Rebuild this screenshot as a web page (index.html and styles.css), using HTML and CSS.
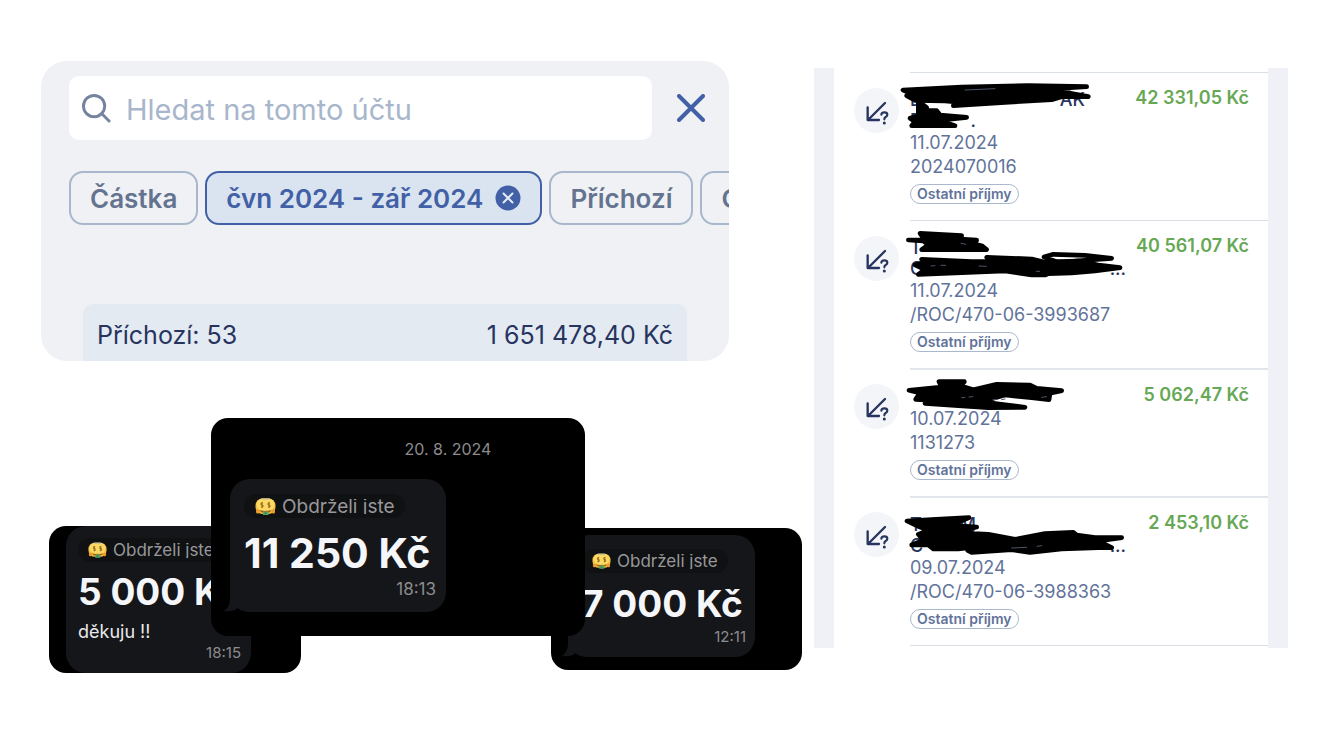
FILE: index.html
```html
<!DOCTYPE html>
<html lang="cs">
<head>
<meta charset="utf-8">
<meta name="viewport" content="width=device-width, initial-scale=1">
<title>Přehled příchozích plateb</title>
<link rel="stylesheet" href="styles.css">
</head>
<body>
<svg class="sprite" aria-hidden="true">
  <symbol id="money-face" viewBox="0 0 42 34">
    <rect x="1" y="1" width="40" height="31" rx="14" fill="#f3bd3c"/>
    <rect x="3" y="1" width="36" height="24" rx="12" fill="#fad863"/>
    <path d="M11 1h20l-3 2H14z" fill="#b9bdae"/>
    <path d="M16 10h-4v4h4v4h-4M14 8v12M30 10h-4v4h4v4h-4M28 8v12" fill="none" stroke="#8f661c" stroke-width="1.8"/>
    <path d="M9 24q12 4 24 0-2 6-12 6T9 24z" fill="#a45d1d"/>
    <path d="M16 27h11v7H16z" fill="#55a866"/>
    <path d="M19 29h4v3h-4z" fill="#2f7d47"/>
    <rect x="2" y="23" width="7" height="8" rx="3" fill="#e79b2d"/>
    <rect x="33" y="23" width="7" height="8" rx="3" fill="#e79b2d"/>
  </symbol>
  <symbol id="tail" viewBox="0 0 24 20">
    <path d="M6 0v8Q5 16 0 19q9 1 14-3 4 4 10 3V0z" fill="#151619"/>
  </symbol>
  <symbol id="incoming" viewBox="0 0 72 72">
    <path d="M57 6L6 57M5 19v38h34" fill="none" stroke="#26345f" stroke-width="7" stroke-linecap="round" stroke-linejoin="round"/>
    <path d="M46 41q1-7 9-7 9 0 9 7 0 4-5 7-4 2-4 7" fill="none" stroke="#26345f" stroke-width="6.500" stroke-linecap="round"/>
    <circle cx="55" cy="66" r="4.500" fill="#26345f"/>
  </symbol>
</svg>
<main class="page">
  <div class="left">
    <section class="account">
      <div class="search-row">
        <label class="search">
          <svg class="search-icon" viewBox="0 0 30 30" aria-hidden="true"><circle cx="12.5" cy="12.5" r="11"/><path d="M20.500 20.500l7.500 7.500"/></svg>
          <input type="text" placeholder="Hledat na tomto účtu" aria-label="Hledat na tomto účtu">
        </label>
        <button class="close" type="button" aria-label="Zavřít"><svg viewBox="0 0 28 28" aria-hidden="true"><path d="M2 2l24 24M26 2L2 26"/></svg></button>
      </div>
      <div class="chips">
        <button class="chip" type="button">Částka</button>
        <button class="chip chip-active" type="button">čvn 2024 - zář 2024
          <svg viewBox="0 0 26 26" aria-hidden="true"><circle cx="13" cy="13" r="12.5" fill="#4260a5"/><path d="M8.500 8.500l9 9M17.500 8.500l-9 9" stroke="#e4ebf5" stroke-width="2" stroke-linecap="round"/></svg>
        </button>
        <button class="chip" type="button">Příchozí</button>
        <button class="chip" type="button">Odchozí</button>
      </div>
      <div class="summary"><span>Příchozí: 53</span><span>1 651 478,40 Kč</span></div>
    </section>

    <section class="chats">
      <article class="chat chat-left">
        <div class="bubble">
          <div class="pill"><svg aria-hidden="true"><use href="#money-face"/></svg><span>Obdrželi jste</span></div>
          <div class="sum">5 000 Kč</div>
          <div class="note">děkuju !!</div>
          <time>18:15</time>
        </div>
      </article>
      <article class="chat chat-main">
        <div class="day">20. 8. 2024</div>
        <div class="bubble">
          <div class="pill"><svg aria-hidden="true"><use href="#money-face"/></svg><span>Obdrželi jste</span></div>
          <div class="sum">11 250 Kč</div>
          <time>18:13</time>
          <svg class="tail" aria-hidden="true"><use href="#tail"/></svg>
        </div>
      </article>
      <article class="chat chat-right">
        <div class="bubble">
          <div class="pill"><svg aria-hidden="true"><use href="#money-face"/></svg><span>Obdrželi jste</span></div>
          <div class="sum">7 000 Kč</div>
          <time>12:11</time>
          <svg class="tail" aria-hidden="true"><use href="#tail"/></svg>
        </div>
      </article>
    </section>
  </div>

  <section class="payments">
    <article class="payment">
      <div class="badge"><svg aria-hidden="true"><use href="#incoming"/></svg></div>
      <div class="body">
        <div class="info">
          <div class="name">
            <div class="line line-short"><span>D</span><span>AK</span></div>
            <div class="line line-tiny"><span>D</span><span>.</span></div>
            <svg class="scribble" viewBox="30 6 660 171" aria-hidden="true">
              <path d="M24 45L200 36L400 32L575 35L490 40L530 56L580 65L500 65L470 74L330 82L175 92L200 82L150 78L60 76L35 62L60 60Z"/>
              <path d="M70 78L95 98L70 105L125 107L135 120L215 127L130 136L180 152L50 152L60 140L45 130L70 122Z"/>
              <path class="slit" d="M210 45L300 41"/>
            </svg>
          </div>
          <div>11.07.2024</div><div>2024070016</div>
          <span class="tag">Ostatní příjmy</span>
        </div>
        <div class="amount">42 331,05 Kč</div>
      </div>
    </article>
    <article class="payment">
      <div class="badge"><svg aria-hidden="true"><use href="#incoming"/></svg></div>
      <div class="body">
        <div class="info">
          <div class="name">
            <div class="line"><span>T</span></div>
            <div class="line"><span>C</span><span>...</span></div>
            <svg class="scribble" viewBox="180 30 660 171" aria-hidden="true">
              <path d="M190 75L240 75L225 55L350 62L345 72L395 75L390 88L410 92L425 104L230 104L250 90L235 78Z"/>
              <path d="M210 150L240 142L230 133L380 140L470 138L425 127L560 132L600 142L640 140L700 138L760 150L825 158L750 168L680 174L610 176L600 180L560 180L480 168L350 173L220 178L240 164Z"/>
              <path class="stroke" d="M640 142L597 126L625 118L720 121L800 130L690 138"/>
              <path class="slit" d="M258 153L270 152M288 151L302 151M402 153L424 154M348 85L362 88M574 169L584 169"/>
            </svg>
          </div>
          <div>11.07.2024</div><div>/ROC/470-06-3993687</div>
          <span class="tag">Ostatní příjmy</span>
        </div>
        <div class="amount">40 561,07 Kč</div>
      </div>
    </article>
    <article class="payment">
      <div class="badge"><svg aria-hidden="true"><use href="#incoming"/></svg></div>
      <div class="body">
        <div class="info">
          <div class="name">
            <div class="line"></div>
            <svg class="scribble" viewBox="180 27 660 171" aria-hidden="true">
              <path d="M192 76L290 66L282 50L358 50L345 62L385 74L455 58L555 60L575 70L650 77L615 85L612 104L560 98L480 90L430 104L420 112L540 127L430 128L240 115L270 106L212 103L225 84Z"/>
              <path class="slit" d="M350 98L360 97M372 96L384 95M444 104L456 103M470 104L480 102M590 97L605 95"/>
            </svg>
          </div>
          <div>10.07.2024</div><div>1131273</div>
          <span class="tag">Ostatní příjmy</span>
        </div>
        <div class="amount">5 062,47 Kč</div>
      </div>
    </article>
    <article class="payment">
      <div class="badge"><svg aria-hidden="true"><use href="#incoming"/></svg></div>
      <div class="body">
        <div class="info">
          <div class="name">
            <div class="line line-tiny"><span>T</span><span>M</span></div>
            <div class="line"><span>C</span><span>...</span></div>
            <svg class="scribble" viewBox="180 33 660 171" aria-hidden="true">
              <path d="M186 90L260 86L372 80L340 94L330 104L395 108L360 116L385 128L430 130L510 145L600 128L685 124L695 132L750 140L830 140L760 150L800 170L760 170L650 174L555 184L500 176L380 184L368 178L390 168L340 174L265 174L250 162L200 162L235 148L220 130L250 118L220 106Z"/>
              <path class="slit" d="M500 171L545 169M576 166L590 164"/>
            </svg>
          </div>
          <div>09.07.2024</div><div>/ROC/470-06-3988363</div>
          <span class="tag">Ostatní příjmy</span>
        </div>
        <div class="amount">2 453,10 Kč</div>
      </div>
    </article>
    <div class="end"></div>
  </section>
</main>
</body>
</html>
```
FILE: styles.css
```css
* { box-sizing: border-box; }
body {
  margin: 0;
  background: #fff;
  color: #26345f;
  font-family: Inter, "Noto Sans", "Liberation Sans", sans-serif;
}
button, input { font: inherit; margin: 0; }
.sprite { display: none; }

.page {
  display: grid;
  grid-template-columns: minmax(0, 761fr) minmax(0, 474fr);
  gap: 12px;
  align-items: start;
  padding: 61px 48px 24px 41px;
}

/* Account panel */
.account {
  margin-right: 73px;
  padding: 15px 0 0 28px;
  border-radius: 26px;
  background: #eff1f5;
  overflow: hidden;
}
.search-row { display: flex; align-items: center; }
.search {
  display: flex;
  flex: 1;
  align-items: center;
  gap: 15px;
  height: 64px;
  padding: 0 13px;
  border-radius: 10px;
  background: #fff;
}
.search-icon {
  flex: none;
  width: 29px;
  height: 29px;
  fill: none;
  stroke: #74849f;
  stroke-width: 3;
  stroke-linecap: round;
}
.search input {
  flex: 1;
  min-width: 0;
  padding: 2px 0 0;
  border: 0;
  outline: 0;
  background: none;
  font-size: 29px;
}
.search input::placeholder { color: #a8b6cb; opacity: 1; }
.close {
  display: grid;
  place-items: center;
  width: 77px;
  height: 64px;
  padding: 0;
  border: 0;
  background: none;
}
.close svg {
  width: 28px;
  height: 28px;
  fill: none;
  stroke: #4260a5;
  stroke-width: 4;
  stroke-linecap: round;
}
.chips { display: flex; gap: 7px; margin-top: 31px; }
.chip {
  display: flex;
  flex: none;
  align-items: center;
  gap: 12px;
  height: 54px;
  padding: 0 19px;
  border: 2px solid #a8b7cc;
  border-radius: 14px;
  background: none;
  color: #64738f;
  font-size: 26px;
  font-weight: 600;
}
.chip-active { border-color: #4260a5; background: #dae4f0; color: #4260a5; }
.chip svg { width: 26px; height: 26px; }
.summary {
  display: flex;
  justify-content: space-between;
  margin: 79px 42px 0 14px;
  padding: 5px 14px 0;
  border-radius: 10px 10px 0 0;
  background: #e4eaf1;
  font-size: 25px;
  line-height: 52px;
}

/* Chat bubbles: the middle card overlaps both neighbours */
.chats {
  display: grid;
  grid-template-columns: 162fr 90fr 250fr 34fr 217fr;
  align-items: start;
  margin: 57px 0 0 8px;
}
.chat {
  grid-row: 1;
  border-radius: 17px;
  background: #000;
  overflow: hidden;
  white-space: nowrap;
}
.chat-left { grid-column: 1 / 3; margin-top: 108px; padding-left: 17px; }
.chat-main { grid-column: 2 / 5; z-index: 1; padding: 18px 0 24px 19px; }
.chat-right { grid-column: 4 / 6; margin-top: 110px; padding: 7px 0 13px 17px; }
.day {
  padding-left: 81px;
  color: #8c8c8e;
  font-size: 16px;
  line-height: 27px;
  text-align: center;
}
.bubble {
  position: relative;
  display: flex;
  flex-direction: column;
  align-items: flex-start;
  border-radius: 20px;
  background: #151619;
}
.chat-main .bubble { width: 216px; margin-top: 16px; padding: 15px 10px 17px 14px; }
.chat-left .bubble { width: 185px; padding: 12px 10px 13px 12px; }
.chat-right .bubble { width: 187px; padding: 14px 9px 14px 14px; }
.pill {
  display: flex;
  align-items: center;
  gap: 6px;
  height: 24px;
  padding: 0 10px 0 11px;
  border-radius: 12px;
  background: #101113;
  color: #98989b;
  font-size: 19px;
}
.pill svg { width: 21px; height: 17px; }
.pill span { overflow: hidden; line-height: 15px; }
.chat-left .pill, .chat-right .pill { padding-left: 10px; font-size: 17px; }
.chat-left .pill svg, .chat-right .pill svg { width: 19px; height: 16px; }
.sum {
  margin-top: 5px;
  color: #f5f6f9;
  font-size: 41px;
  font-weight: 700;
  line-height: 60px;
}
.chat-left .sum { margin-top: 0; font-size: 37px; line-height: 60px; }
.chat-right .sum { margin-top: 4px; font-size: 37px; line-height: 54px; }
.note { padding-top: 1px; color: #e9e9ec; font-size: 18px; line-height: 18px; }
.bubble time {
  align-self: flex-end;
  color: #8c8c8e;
  font-size: 17px;
  line-height: 12px;
}
.chat-left time { padding-top: 5px; line-height: 14px; }
.chat-left time, .chat-right time { font-size: 15px; }
.tail { position: absolute; left: -6px; bottom: 0; width: 24px; height: 20px; }

/* Payment list */
.payments {
  margin-top: 7px;
  padding-top: 4px;
  border: solid #eff1f6;
  border-width: 0 20px;
}
.payment { display: flex; padding-left: 20px; }
.badge {
  display: grid;
  flex: none;
  place-items: center;
  width: 45px;
  height: 45px;
  margin: 16px 11px 0 0;
  border-radius: 50%;
  background: #f4f5f8;
}
.badge svg { width: 24px; height: 24px; margin: 4px 0 0 3px; }
.body {
  display: flex;
  flex: 1;
  justify-content: space-between;
  min-width: 0;
  padding-bottom: 16px;
  border-top: 1px solid #dadfe6;
}
.payment:nth-child(n+3) .body { border-top: 2px solid #e2e6eb; }
.info {
  padding-top: 16px;
  color: #62739a;
  font-size: 18px;
  line-height: 24px;
}
.name {
  position: relative;
  width: 216px;
  color: #26345f;
  font-weight: 500;
}
.line { display: flex; justify-content: space-between; height: 21px; line-height: 21px; }
.line-short { width: 175px; }
.line-tiny { width: 66px; }
.scribble {
  position: absolute;
  left: -5px;
  top: -12px;
  width: 220px;
  height: 57px;
  overflow: visible;
  fill: #000;
  stroke: #000;
  stroke-width: 14;
  stroke-linecap: round;
  stroke-linejoin: round;
}
.scribble .stroke { fill: none; }
.scribble .slit { fill: none; stroke: #4d5468; stroke-width: 3; }
.tag {
  display: block;
  width: max-content;
  height: 20px;
  margin-top: 5px;
  padding: 0 6px;
  border: 1px solid #a9b8cc;
  border-radius: 10px;
  font-size: 14px;
  font-weight: 600;
  line-height: 18px;
}
.amount {
  padding: 11px 19px 0 0;
  margin-left: -80px;
  color: #67a855;
  font-size: 18px;
  font-weight: 600;
  line-height: 28px;
  white-space: nowrap;
}
.end { height: 3px; margin-left: 76px; border-top: 1px solid #dadfe6; }
```
